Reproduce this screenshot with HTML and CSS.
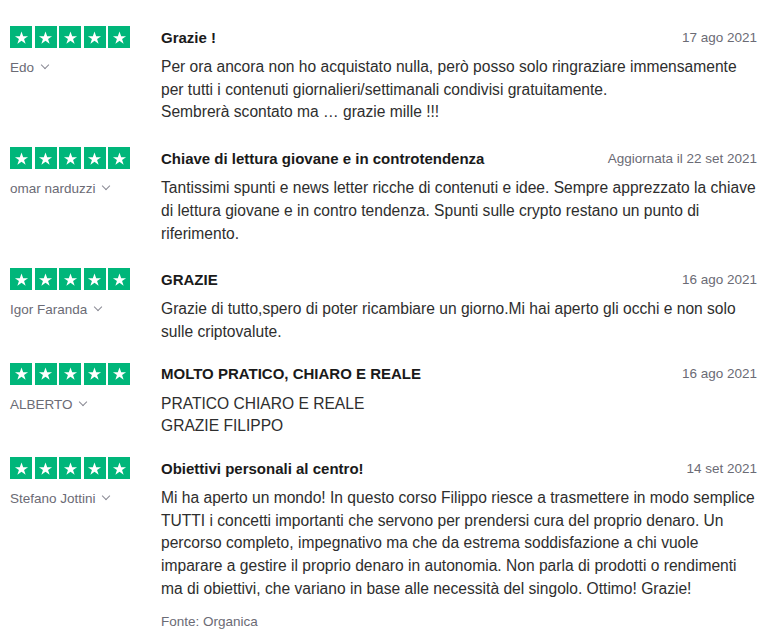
FILE: index.html
```html
<!DOCTYPE html>
<html lang="it">

<head>
    <meta charset="UTF-8">
    <meta name="viewport" content="width=device-width, initial-scale=1.0">
    <title>Recensioni</title>
    <link rel="stylesheet" href="styles.css">
</head>

<body>
    <div class="reviews">

        <div class="review">
            <div class="review-side">
                <div class="stars">
                    <span class="star"><svg viewBox="0 0 24 24"><path d="M12 3.5l2.35 6.6h6.9l-5.6 4.1 2.15 6.6L12 16.7l-5.8 4.1 2.15-6.6-5.6-4.1h6.9z"/></svg></span>
                    <span class="star"><svg viewBox="0 0 24 24"><path d="M12 3.5l2.35 6.6h6.9l-5.6 4.1 2.15 6.6L12 16.7l-5.8 4.1 2.15-6.6-5.6-4.1h6.9z"/></svg></span>
                    <span class="star"><svg viewBox="0 0 24 24"><path d="M12 3.5l2.35 6.6h6.9l-5.6 4.1 2.15 6.6L12 16.7l-5.8 4.1 2.15-6.6-5.6-4.1h6.9z"/></svg></span>
                    <span class="star"><svg viewBox="0 0 24 24"><path d="M12 3.5l2.35 6.6h6.9l-5.6 4.1 2.15 6.6L12 16.7l-5.8 4.1 2.15-6.6-5.6-4.1h6.9z"/></svg></span>
                    <span class="star"><svg viewBox="0 0 24 24"><path d="M12 3.5l2.35 6.6h6.9l-5.6 4.1 2.15 6.6L12 16.7l-5.8 4.1 2.15-6.6-5.6-4.1h6.9z"/></svg></span>
                </div>
                <div class="author">Edo <span class="chevron"></span></div>
            </div>
            <div class="review-main">
                <div class="review-head">
                    <h3>Grazie !</h3>
                    <span class="date">17 ago 2021</span>
                </div>
                <p>Per ora ancora non ho acquistato nulla, però posso solo ringraziare immensamente<br>per tutti i contenuti giornalieri/settimanali condivisi gratuitamente.<br>Sembrerà scontato ma … grazie mille !!!</p>
            </div>
        </div>

        <div class="review">
            <div class="review-side">
                <div class="stars">
                    <span class="star"><svg viewBox="0 0 24 24"><path d="M12 3.5l2.35 6.6h6.9l-5.6 4.1 2.15 6.6L12 16.7l-5.8 4.1 2.15-6.6-5.6-4.1h6.9z"/></svg></span>
                    <span class="star"><svg viewBox="0 0 24 24"><path d="M12 3.5l2.35 6.6h6.9l-5.6 4.1 2.15 6.6L12 16.7l-5.8 4.1 2.15-6.6-5.6-4.1h6.9z"/></svg></span>
                    <span class="star"><svg viewBox="0 0 24 24"><path d="M12 3.5l2.35 6.6h6.9l-5.6 4.1 2.15 6.6L12 16.7l-5.8 4.1 2.15-6.6-5.6-4.1h6.9z"/></svg></span>
                    <span class="star"><svg viewBox="0 0 24 24"><path d="M12 3.5l2.35 6.6h6.9l-5.6 4.1 2.15 6.6L12 16.7l-5.8 4.1 2.15-6.6-5.6-4.1h6.9z"/></svg></span>
                    <span class="star"><svg viewBox="0 0 24 24"><path d="M12 3.5l2.35 6.6h6.9l-5.6 4.1 2.15 6.6L12 16.7l-5.8 4.1 2.15-6.6-5.6-4.1h6.9z"/></svg></span>
                </div>
                <div class="author">omar narduzzi <span class="chevron"></span></div>
            </div>
            <div class="review-main">
                <div class="review-head">
                    <h3>Chiave di lettura giovane e in controtendenza</h3>
                    <span class="date">Aggiornata il 22 set 2021</span>
                </div>
                <p>Tantissimi spunti e news letter ricche di contenuti e idee. Sempre apprezzato la chiave<br>di lettura giovane e in contro tendenza. Spunti sulle crypto restano un punto di<br>riferimento.</p>
            </div>
        </div>

        <div class="review review-tight">
            <div class="review-side">
                <div class="stars">
                    <span class="star"><svg viewBox="0 0 24 24"><path d="M12 3.5l2.35 6.6h6.9l-5.6 4.1 2.15 6.6L12 16.7l-5.8 4.1 2.15-6.6-5.6-4.1h6.9z"/></svg></span>
                    <span class="star"><svg viewBox="0 0 24 24"><path d="M12 3.5l2.35 6.6h6.9l-5.6 4.1 2.15 6.6L12 16.7l-5.8 4.1 2.15-6.6-5.6-4.1h6.9z"/></svg></span>
                    <span class="star"><svg viewBox="0 0 24 24"><path d="M12 3.5l2.35 6.6h6.9l-5.6 4.1 2.15 6.6L12 16.7l-5.8 4.1 2.15-6.6-5.6-4.1h6.9z"/></svg></span>
                    <span class="star"><svg viewBox="0 0 24 24"><path d="M12 3.5l2.35 6.6h6.9l-5.6 4.1 2.15 6.6L12 16.7l-5.8 4.1 2.15-6.6-5.6-4.1h6.9z"/></svg></span>
                    <span class="star"><svg viewBox="0 0 24 24"><path d="M12 3.5l2.35 6.6h6.9l-5.6 4.1 2.15 6.6L12 16.7l-5.8 4.1 2.15-6.6-5.6-4.1h6.9z"/></svg></span>
                </div>
                <div class="author">Igor Faranda <span class="chevron"></span></div>
            </div>
            <div class="review-main">
                <div class="review-head">
                    <h3>GRAZIE</h3>
                    <span class="date">16 ago 2021</span>
                </div>
                <p>Grazie di tutto,spero di poter ricambiare un giorno.Mi hai aperto gli occhi e non solo<br>sulle criptovalute.</p>
            </div>
        </div>

        <div class="review review-tight">
            <div class="review-side">
                <div class="stars">
                    <span class="star"><svg viewBox="0 0 24 24"><path d="M12 3.5l2.35 6.6h6.9l-5.6 4.1 2.15 6.6L12 16.7l-5.8 4.1 2.15-6.6-5.6-4.1h6.9z"/></svg></span>
                    <span class="star"><svg viewBox="0 0 24 24"><path d="M12 3.5l2.35 6.6h6.9l-5.6 4.1 2.15 6.6L12 16.7l-5.8 4.1 2.15-6.6-5.6-4.1h6.9z"/></svg></span>
                    <span class="star"><svg viewBox="0 0 24 24"><path d="M12 3.5l2.35 6.6h6.9l-5.6 4.1 2.15 6.6L12 16.7l-5.8 4.1 2.15-6.6-5.6-4.1h6.9z"/></svg></span>
                    <span class="star"><svg viewBox="0 0 24 24"><path d="M12 3.5l2.35 6.6h6.9l-5.6 4.1 2.15 6.6L12 16.7l-5.8 4.1 2.15-6.6-5.6-4.1h6.9z"/></svg></span>
                    <span class="star"><svg viewBox="0 0 24 24"><path d="M12 3.5l2.35 6.6h6.9l-5.6 4.1 2.15 6.6L12 16.7l-5.8 4.1 2.15-6.6-5.6-4.1h6.9z"/></svg></span>
                </div>
                <div class="author">ALBERTO <span class="chevron"></span></div>
            </div>
            <div class="review-main">
                <div class="review-head">
                    <h3>MOLTO PRATICO, CHIARO E REALE</h3>
                    <span class="date">16 ago 2021</span>
                </div>
                <p>PRATICO CHIARO E REALE<br>GRAZIE FILIPPO</p>
            </div>
        </div>

        <div class="review review-last">
            <div class="review-side">
                <div class="stars">
                    <span class="star"><svg viewBox="0 0 24 24"><path d="M12 3.5l2.35 6.6h6.9l-5.6 4.1 2.15 6.6L12 16.7l-5.8 4.1 2.15-6.6-5.6-4.1h6.9z"/></svg></span>
                    <span class="star"><svg viewBox="0 0 24 24"><path d="M12 3.5l2.35 6.6h6.9l-5.6 4.1 2.15 6.6L12 16.7l-5.8 4.1 2.15-6.6-5.6-4.1h6.9z"/></svg></span>
                    <span class="star"><svg viewBox="0 0 24 24"><path d="M12 3.5l2.35 6.6h6.9l-5.6 4.1 2.15 6.6L12 16.7l-5.8 4.1 2.15-6.6-5.6-4.1h6.9z"/></svg></span>
                    <span class="star"><svg viewBox="0 0 24 24"><path d="M12 3.5l2.35 6.6h6.9l-5.6 4.1 2.15 6.6L12 16.7l-5.8 4.1 2.15-6.6-5.6-4.1h6.9z"/></svg></span>
                    <span class="star"><svg viewBox="0 0 24 24"><path d="M12 3.5l2.35 6.6h6.9l-5.6 4.1 2.15 6.6L12 16.7l-5.8 4.1 2.15-6.6-5.6-4.1h6.9z"/></svg></span>
                </div>
                <div class="author">Stefano Jottini <span class="chevron"></span></div>
            </div>
            <div class="review-main">
                <div class="review-head">
                    <h3>Obiettivi personali al centro!</h3>
                    <span class="date">14 set 2021</span>
                </div>
                <p>Mi ha aperto un mondo! In questo corso Filippo riesce a trasmettere in modo semplice<br>TUTTI i concetti importanti che servono per prendersi cura del proprio denaro. Un<br>percorso completo, impegnativo ma che da estrema soddisfazione a chi vuole<br>imparare a gestire il proprio denaro in autonomia. Non parla di prodotti o rendimenti<br>ma di obiettivi, che variano in base alle necessità del singolo. Ottimo! Grazie!</p>
                <div class="source">Fonte: Organica</div>
            </div>
        </div>

    </div>
</body>

</html>
```

FILE: styles.css
```css
body {
    margin: 0;
    background: #fff;
    font-family: "Liberation Sans", Arial, sans-serif;
    color: #2e2e2e;
}

.reviews {
    padding: 26px 0 0 10px;
}

.review {
    display: flex;
    padding-bottom: 23px;
}

.review-tight {
    padding-bottom: 19px;
}

.review-last {
    padding-bottom: 0;
}

.review-side {
    width: 151px;
    flex-shrink: 0;
}

.stars {
    display: flex;
    gap: 2.5px;
}

.star {
    width: 22px;
    height: 22px;
    background-color: #00b67a;
    display: flex;
    align-items: center;
    justify-content: center;
}

.star svg {
    width: 17px;
    height: 17px;
    fill: #fff;
}

.author {
    margin-top: 11px;
    font-size: 13.5px;
    color: #6b6b75;
    line-height: 18px;
}

.chevron {
    display: inline-block;
    width: 5px;
    height: 5px;
    border-right: 1px solid #8a8a94;
    border-bottom: 1px solid #8a8a94;
    transform: rotate(45deg);
    margin-left: 4px;
    position: relative;
    top: -4px;
}

.review-main {
    flex: 1;
}

.review-head {
    display: flex;
    justify-content: space-between;
    align-items: center;
    height: 22px;
    padding-right: 11px;
}

.review-head h3 {
    margin: 0;
    font-size: 15px;
    font-weight: bold;
    color: #1a1a1a;
}

.date {
    font-size: 13.5px;
    color: #6b6b75;
}

.review-main p {
    margin: 8px 0 0;
    font-size: 15.6px;
    line-height: 22.7px;
}

.source {
    margin-top: 13px;
    font-size: 13.5px;
    color: #6b6b75;
}
```
